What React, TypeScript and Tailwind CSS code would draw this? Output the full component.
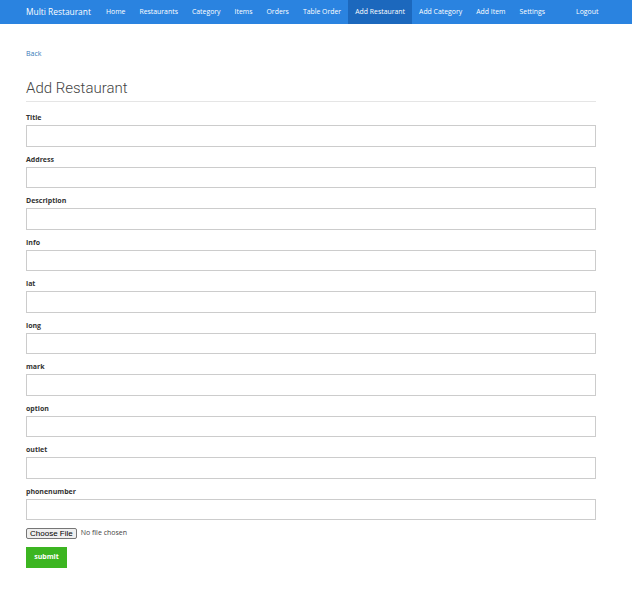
const NAV = ['Home', 'Restaurants', 'Category', 'Items', 'Orders', 'Table Order', 'Add Restaurant', 'Add Category', 'Add Item', 'Settings'];

const FIELDS = ['Title', 'Address', 'Description', 'Info', 'lat', 'long', 'mark', 'option', 'outlet', 'phonenumber'];

export default function App() {
  return (
    <div className="min-h-[594px] bg-white" style={{ fontFamily: '"Open Sans", "Noto Sans", sans-serif' }}>
      <nav className="h-6 bg-[#2a83e0] flex items-stretch pl-[26px] text-white">
        <div className="flex items-center text-[8.4px] mr-2">Multi Restaurant</div>
        <ul className="flex items-stretch text-[6.9px]">
          {NAV.map(n => (
            <li key={n} className={`flex items-center px-[7px] ${n === 'Add Restaurant' ? 'bg-[#1c68bd]' : ''}`}>
              {n}
            </li>
          ))}
        </ul>
        <div className="flex items-center text-[6.9px] ml-[24px]">Logout</div>
      </nav>

      <div className="px-[26px] w-[622px]">
        <div className="pt-[25px] text-[7px] text-[#337ab7]">Back</div>
        <h1 className="mt-[17px] text-[15px] font-light text-[#444] pb-[2px] border-b border-[#e5e5e5]" style={{ fontFamily: 'Roboto, "Open Sans", sans-serif' }}>Add Restaurant</h1>
        <form className="mt-[7px]">
          {FIELDS.map(f => (
            <div key={f} className="mb-[0.5px]">
              <label className="block text-[7px] font-bold text-[#333] h-[11px] leading-[11px] pt-[3px]">{f}</label>
              <input type="text" className="block w-[570px] h-[21.5px] mt-[5px] mb-[4px] border border-[#cccccc] bg-white outline-none" />
            </div>
          ))}
          <div className="flex items-center mt-[8px] text-[7px]">
            <span className="h-[11px] px-[3px] border border-[#767676] bg-[#efefef] rounded-[2px] text-[8px] leading-[9px] text-black" style={{ fontFamily: 'Arial, "Liberation Sans", sans-serif' }}>Choose File</span>
            <span className="ml-[4px] text-[#444]">No file chosen</span>
          </div>
          <button type="button" className="mt-[8px] w-[41px] h-[21px] bg-[#3cb521] text-white text-[7px] font-bold">submit</button>
        </form>
      </div>
    </div>
  );
}
